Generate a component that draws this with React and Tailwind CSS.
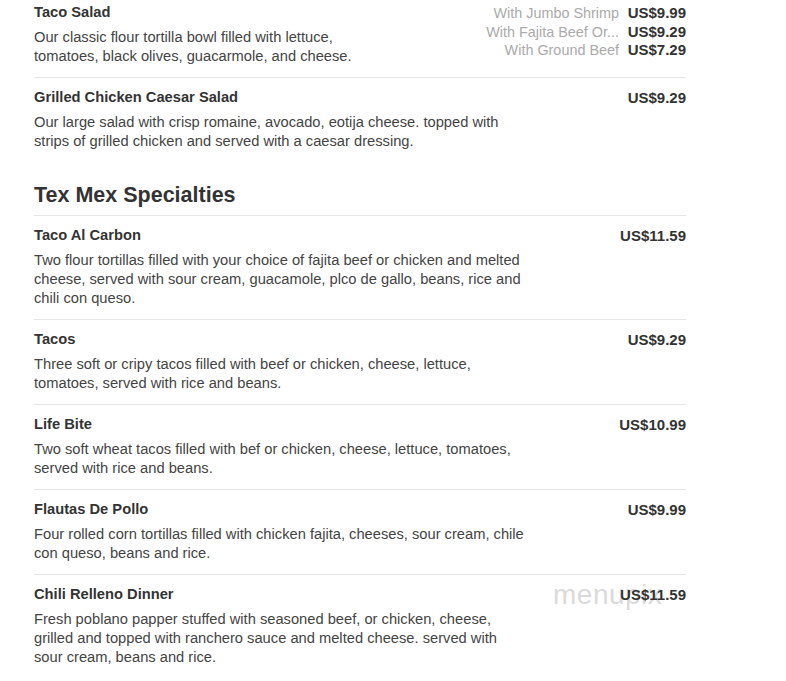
const FONT = { fontFamily: '"Liberation Sans", Arial, sans-serif' };

const saladItems = [
  {
    name: "Taco Salad",
    lines: [
      "Our classic flour tortilla bowl filled with lettuce,",
      "tomatoes, black olives, guacarmole, and cheese.",
    ],
    options: [
      { label: "With Jumbo Shrimp", price: "US$9.99" },
      { label: "With Fajita Beef Or...", price: "US$9.29" },
      { label: "With Ground Beef", price: "US$7.29" },
    ],
  },
  {
    name: "Grilled Chicken Caesar Salad",
    price: "US$9.29",
    lines: [
      "Our large salad with crisp romaine, avocado, eotija cheese. topped with",
      "strips of grilled chicken and served with a caesar dressing.",
    ],
  },
];

const texMex = [
  {
    name: "Taco Al Carbon",
    price: "US$11.59",
    lines: [
      "Two flour tortillas filled with your choice of fajita beef or chicken and melted",
      "cheese, served with sour cream, guacamole, plco de gallo, beans, rice and",
      "chili con queso.",
    ],
  },
  {
    name: "Tacos",
    price: "US$9.29",
    lines: [
      "Three soft or cripy tacos filled with beef or chicken, cheese, lettuce,",
      "tomatoes, served with rice and beans.",
    ],
  },
  {
    name: "Life Bite",
    price: "US$10.99",
    lines: [
      "Two soft wheat tacos filled with bef or chicken, cheese, lettuce, tomatoes,",
      "served with rice and beans.",
    ],
  },
  {
    name: "Flautas De Pollo",
    price: "US$9.99",
    lines: [
      "Four rolled corn tortillas filled with chicken fajita, cheeses, sour cream, chile",
      "con queso, beans and rice.",
    ],
  },
  {
    name: "Chili Relleno Dinner",
    price: "US$11.59",
    lines: [
      "Fresh poblano papper stuffed with seasoned beef, or chicken, cheese,",
      "grilled and topped with ranchero sauce and melted cheese. served with",
      "sour cream, beans and rice.",
    ],
  },
];

function MenuItem({ item, last, first }) {
  return (
    <div
      className={`flex justify-between pb-[11px] ${first ? "pt-[4px]" : "pt-[11px]"} ${
        last ? "" : "border-b border-[#e6e6e6]"
      }`}
    >
      <div className="flex flex-col">
        <h3 className="text-[14.7px] leading-[17px] font-bold text-[#333]">{item.name}</h3>
        <p className="mt-[7px] text-[14.7px] leading-[19px] text-[#444]">
          {item.lines.map((l, i) => (
            <span key={i} className="block whitespace-nowrap">
              {l}
            </span>
          ))}
        </p>
      </div>

      {item.options ? (
        <div className="flex flex-col">
          {item.options.map((o, i) => (
            <div key={i} className="flex justify-end items-center gap-[8px] leading-[18.5px]">
              <span className="text-[14.4px] text-[#aaa]">{o.label}</span>
              <span className="text-[15px] font-bold text-[#333] w-[59px] text-right">{o.price}</span>
            </div>
          ))}
        </div>
      ) : (
        <div className="text-[15px] leading-[17px] font-bold text-[#333]">{item.price}</div>
      )}
    </div>
  );
}

export default function App() {
  return (
    <div className="relative min-h-[681px] w-full bg-white overflow-hidden" style={FONT}>
      {/* watermark, sits behind the menu text */}
      <span className="absolute left-[553px] top-[578px] text-[28px] leading-[34px] text-[#dadada] tracking-[0.5px] pointer-events-none select-none">
        menupix
      </span>

      <div className="relative ml-[34px] w-[652px]">
        {/* -- Salads (tail end) -- */}
        {saladItems.map((item, i) => (
          <MenuItem key={item.name} item={item} first={i === 0} last={i === saladItems.length - 1} />
        ))}

        {/* -- Tex Mex -- */}
        <h2 className="mt-[21px] pb-[8px] text-[21.5px] leading-[24px] font-bold text-[#333] border-b border-[#e6e6e6]">
          Tex Mex Specialties
        </h2>
        {texMex.map((item, i) => (
          <MenuItem key={item.name} item={item} last={i === texMex.length - 1} />
        ))}
      </div>
    </div>
  );
}
